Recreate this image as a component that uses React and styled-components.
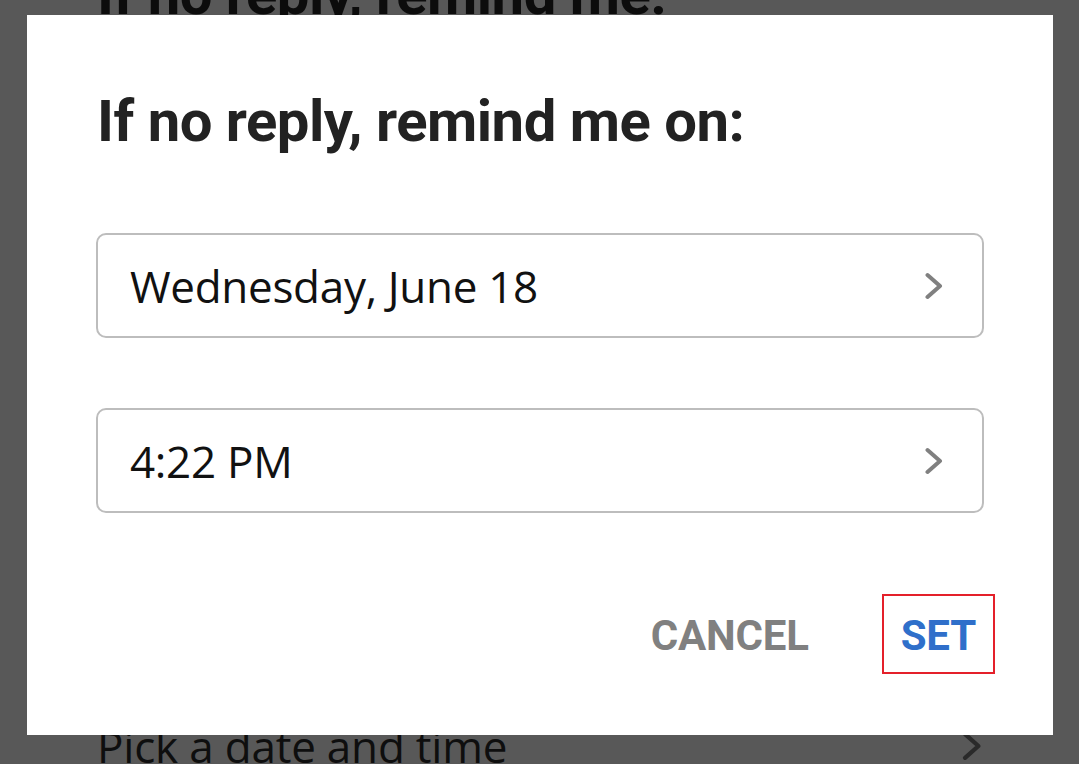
import React from "react";
import styled, { createGlobalStyle } from "styled-components";

const GlobalStyle = createGlobalStyle`
  html, body {
    margin: 0;
    padding: 0;
    overflow: hidden;
  }
  body {
    font-family: "Open Sans", "Liberation Sans", sans-serif;
  }
`;

// the page that sits behind the dimmed backdrop
const Screen = styled.div`
  height: 764px;
  overflow: hidden;
  background: #585858;
  display: flex;
  flex-direction: column;
  padding: 0 97px 0 97px;
  box-sizing: border-box;
`;

const BehindHeading = styled.div`
  margin-top: -40px;
  font-family: Roboto, "Liberation Sans", sans-serif;
  font-weight: 700;
  font-size: 58px;
  line-height: 68px;
  letter-spacing: -0.5px;
  color: #0c0c0c;
  white-space: nowrap;
`;

const BehindRow = styled.div`
  margin-top: auto;
  margin-bottom: -12px;
  height: 60px;
  display: flex;
  align-items: center;
  justify-content: space-between;
  font-size: 44px;
  line-height: 60px;
  letter-spacing: -0.2px;
  color: #0e0e0e;
`;

const Overlay = styled.div`
  position: fixed;
  inset: 0;
  padding: 15px 26px 29px 27px;
  box-sizing: border-box;
  display: flex;
`;

const Dialog = styled.div`
  flex: 1;
  background: #fff;
  padding: 72px 58px 0 69px;
  display: flex;
  flex-direction: column;
`;

const Title = styled.h2`
  margin: 0;
  padding-left: 1px;
  font-family: Roboto, "Liberation Sans", sans-serif;
  font-weight: 700;
  font-size: 58px;
  line-height: 68px;
  letter-spacing: -0.5px;
  color: #222;
  white-space: nowrap;
`;

const Fields = styled.div`
  margin-top: 78px;
  margin-right: 11px;
  display: flex;
  flex-direction: column;
  gap: 70px;
`;

const Field = styled.button`
  height: 105px;
  box-sizing: border-box;
  border: 2px solid #bdbdbd;
  border-radius: 10px;
  background: #fff;
  padding: 0 39px 0 32px;
  display: flex;
  align-items: center;
  justify-content: space-between;
  font-family: "Open Sans", "Liberation Sans", sans-serif;
  font-size: 44px;
  letter-spacing: -0.3px;
  color: #111;
  cursor: pointer;
  text-align: left;
`;

const Footer = styled.div`
  margin-top: 81px;
  display: flex;
  justify-content: flex-end;
  gap: 54px;
`;

const Action = styled.button`
  height: 80px;
  box-sizing: border-box;
  padding: 3px 17px 0;
  background: transparent;
  border: 2px solid ${(p) => (p.$marked ? "#e4202a" : "transparent")};
  font-family: Roboto, "Liberation Sans", sans-serif;
  font-weight: 700;
  font-size: 42px;
  letter-spacing: -0.2px;
  color: ${(p) => (p.$primary ? "#2f6fca" : "#808080")};
  cursor: pointer;
`;

function Chevron({ color = "#808080", width = 18, height = 28 }) {
  return (
    <svg width={width} height={height} viewBox="0 0 18 28" fill="none">
      <polyline
        points="2.5,3 15,14 2.5,25"
        stroke={color}
        strokeWidth="4"
        strokeLinecap="round"
        strokeLinejoin="round"
      />
    </svg>
  );
}

export default function App() {
  return (
    <>
      <GlobalStyle />
      <Screen>
        <BehindHeading>If no reply, remind me.</BehindHeading>
        <BehindRow>
          <span>Pick a date and time</span>
          <Chevron color="#2a2a2a" width={20} height={30} />
        </BehindRow>
      </Screen>
      <Overlay>
        <Dialog>
          <Title>If no reply, remind me on:</Title>
          <Fields>
            <Field>
              <span>Wednesday, June 18</span>
              <Chevron />
            </Field>
            <Field>
              <span>4:22 PM</span>
              <Chevron />
            </Field>
          </Fields>
          <Footer>
            <Action>CANCEL</Action>
            <Action $primary $marked>SET</Action>
          </Footer>
        </Dialog>
      </Overlay>
    </>
  );
}
